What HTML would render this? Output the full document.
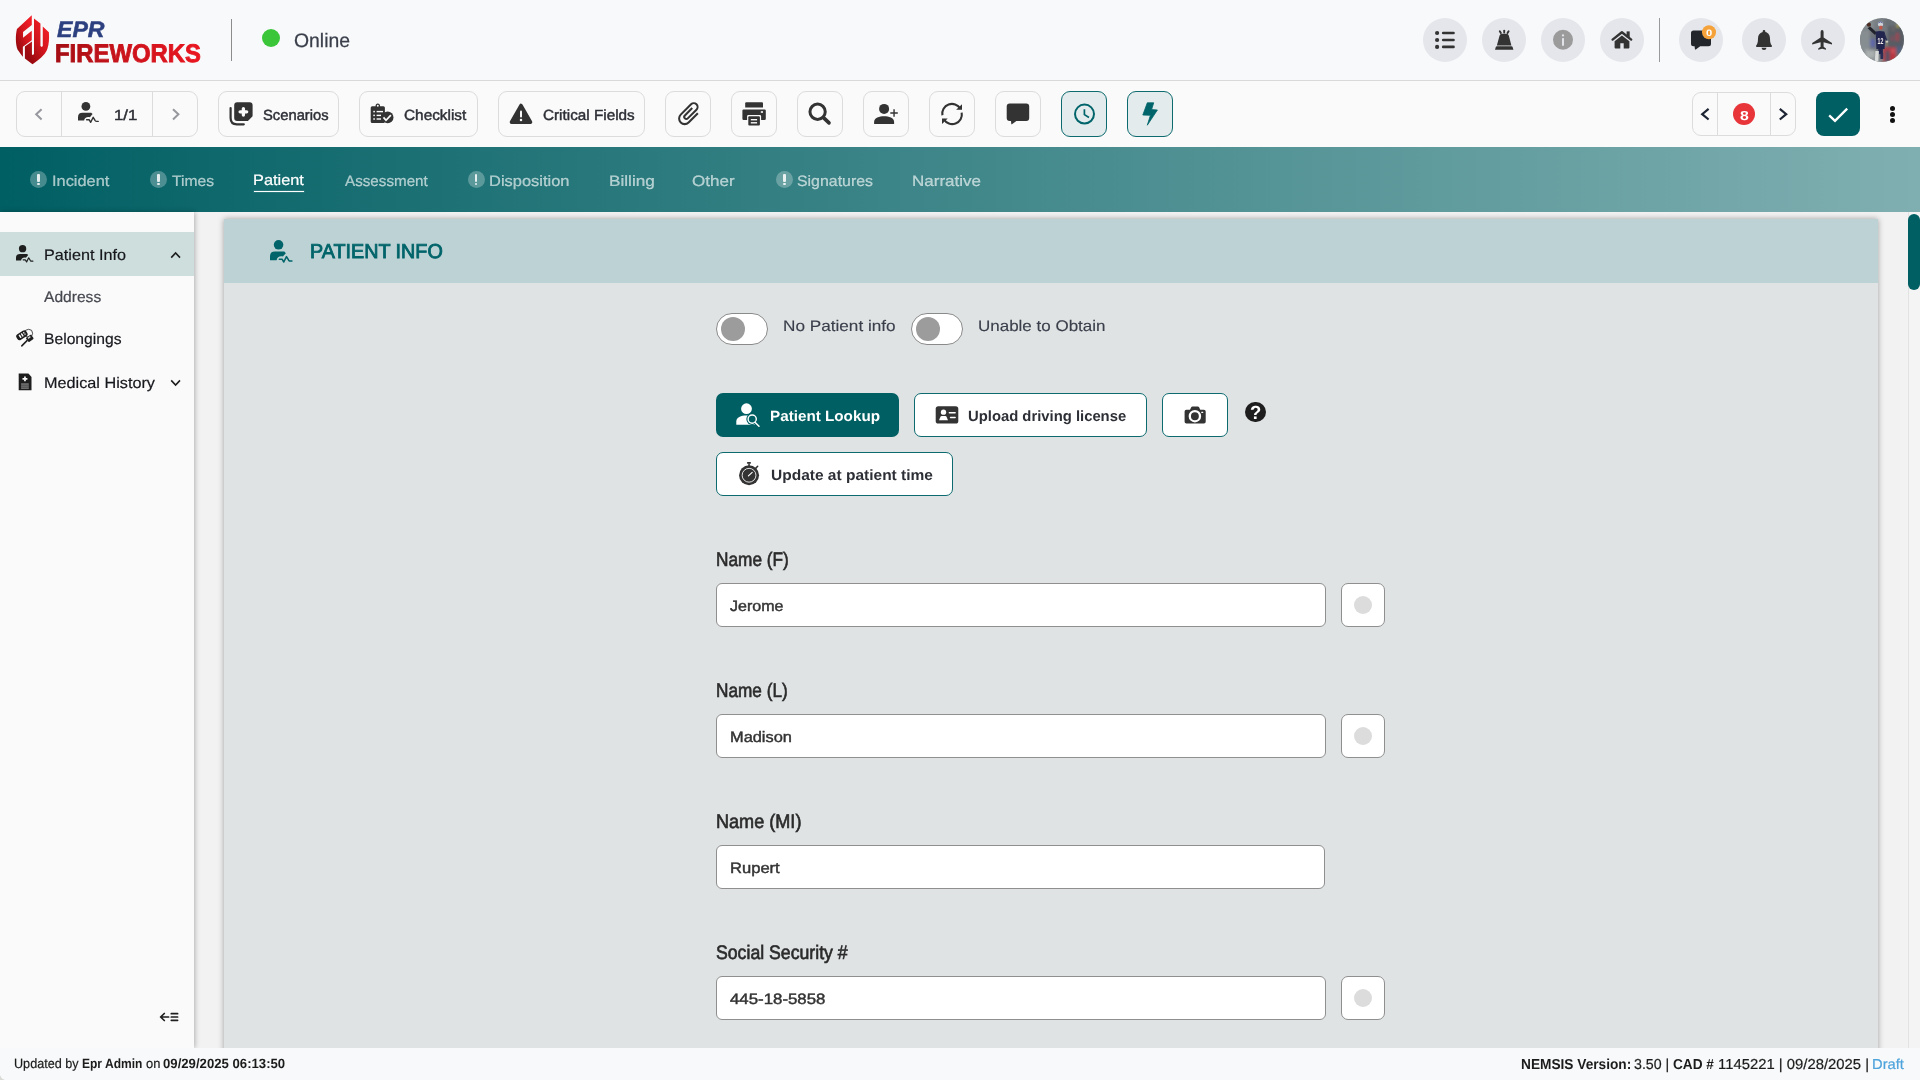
<!DOCTYPE html>
<html lang="en"><head><meta charset="utf-8"><title>EPR Fireworks - Patient Info</title>
<style>
*{box-sizing:border-box;margin:0;padding:0}
html,body{width:1920px;height:1080px;overflow:hidden;background:#f2f2f2;font-family:"Liberation Sans",sans-serif}
.a{position:absolute}
.t{position:absolute;white-space:nowrap;line-height:1;transform-origin:0 0;font-family:"Liberation Sans",sans-serif;text-rendering:geometricPrecision}
svg{position:absolute;overflow:visible}
#hdr{left:0;top:0;width:1920px;height:81px;background:#f8f9fa;border-bottom:1px solid #d9d9d9}
#tb{left:0;top:81px;width:1920px;height:66px;background:#fafafa}
#nav{left:0;top:147px;width:1920px;height:65px;background:linear-gradient(90deg,#005f63 0%,#80afb1 100%)}
#side{left:0;top:212px;width:194px;height:836px;background:#fafafa;box-shadow:1px 0 5px rgba(0,0,0,.28)}
#main{left:194px;top:212px;width:1726px;height:836px;background:#f2f2f2;overflow:hidden}
#card{left:30px;top:7px;width:1654px;height:900px;background:#dfe3e4;box-shadow:0 0 6px rgba(0,0,0,.35)}
#chead{left:0;top:0;width:1654px;height:64px;background:#bdd2d4}
#foot{left:0;top:1048px;width:1920px;height:32px;background:#f8f9fa}
.circ{position:absolute;width:44px;height:44px;border-radius:50%;background:#e4e6eb;top:18px}
.bt{position:absolute;top:91px;height:46px;border:1px solid #dcdcdc;border-radius:9px;background:#fafafa}
.sq{width:46px}
.act{background:#e3ebec;border:1.5px solid #0d6b6f}
.inp{position:absolute;left:716px;width:610px;height:44px;border:1px solid #8f8f8f;border-radius:6px;background:#fff}
.nv{position:absolute;left:1341px;width:44px;height:44px;border:1px solid #8f8f8f;border-radius:7px;background:#fff}
.nv:after{content:"";position:absolute;left:12px;top:12px;width:18px;height:18px;border-radius:50%;background:#dcdcdc}
.tog{position:absolute;top:313px;width:52px;height:32px;border-radius:16px;border:1px solid #8a8a8a;background:#fff}
.tog:after{content:"";position:absolute;left:4px;top:3px;width:24px;height:24px;border-radius:50%;background:#9c9c9c}
.ob{position:absolute;height:44px;border:1.5px solid #0d6b6f;border-radius:7px;background:#fff}
</style></head>
<body>
<header>
<div id="hdr" class="a"></div>
<div class="a" style="left:231px;top:19px;width:1px;height:42px;background:#8c8c8c"></div>
<div class="a" style="left:262px;top:29px;width:18px;height:18px;border-radius:50%;background:#3bc63a"></div>
<span class="t" style="left:293.96px;top:32px;transform:scaleX(0.9933);font-size:19.5px;font-weight:400;-webkit-text-stroke-width:0.25px;color:#3a3f4b;">Online</span>
<span class="t" style="left:56.66px;top:19px;transform:scaleX(1.0308);font-size:22.4px;font-weight:700;font-style:italic;-webkit-text-stroke-width:0.5px;color:#2d4180;">EPR</span>
<span class="t" style="left:55.13px;top:42px;transform:scaleX(0.9407);font-size:25.4px;font-weight:700;-webkit-text-stroke-width:0.9px;color:#c8141d;background:linear-gradient(90deg,#a40d14 0%,#c9131b 45%,#ea1620 100%);-webkit-background-clip:text;background-clip:text;color:transparent;-webkit-text-stroke-color:transparent;">FIREWORKS</span>
<div class="circ" style="left:1423px"></div>
<div class="circ" style="left:1482px"></div>
<div class="circ" style="left:1541px"></div>
<div class="circ" style="left:1600px"></div>
<div class="circ" style="left:1679px"></div>
<div class="circ" style="left:1742px"></div>
<div class="circ" style="left:1801px"></div>
<div class="a" style="left:1659px;top:18px;width:1px;height:44px;background:#9a9a9a"></div>
<svg style="left:10px;top:10px;width:50px;height:60px" viewBox="0 0 900 1080">
<defs><linearGradient id="lg" x1="0.85" y1="0.15" x2="0.2" y2="0.85"><stop offset="0" stop-color="#f01d26"/><stop offset="0.45" stop-color="#d4161e"/><stop offset="1" stop-color="#9a0a10"/></linearGradient></defs>
<path fill="url(#lg)" d="M392,95 L125,340 C98,450 98,600 135,710 L225,838 L232,838 L232,660 L392,545 L392,375 L235,500 L235,395 L392,270 Z"/>
<path fill="url(#lg)" d="M432,155 L548,245 L548,650 L572,668 L590,650 L590,295 L700,400 C708,520 702,610 672,700 C640,785 590,840 405,975 L268,872 L268,655 L395,565 L395,800 L410,812 L432,790 Z"/>
</svg>
<svg style="left:1430px;top:28px;width:30px;height:24px" viewBox="1430 28 30 24" ><circle cx="1437.1" cy="33" r="2.1" fill="#333"/><line x1="1443.2" y1="33" x2="1453.5" y2="33" stroke="#333" stroke-width="2.6" stroke-linecap="round"/><circle cx="1437.1" cy="40" r="2.1" fill="#333"/><line x1="1443.2" y1="40" x2="1453.5" y2="40" stroke="#333" stroke-width="2.6" stroke-linecap="round"/><circle cx="1437.1" cy="46.9" r="2.1" fill="#333"/><line x1="1443.2" y1="46.9" x2="1453.5" y2="46.9" stroke="#333" stroke-width="2.6" stroke-linecap="round"/></svg>
<svg style="left:1490px;top:28px;width:28px;height:24px" viewBox="1490 28 28 24" ><path fill="#333" d="M1497,45 L1499.6,35.6 Q1500.1,33.7 1502,33.7 L1506.4,33.7 Q1508.3,33.7 1508.8,35.6 L1511.4,45.4 L1497,45.4 Z"/>
<path fill="#333" d="M1495,49.8 L1495.8,47 Q1496,46.2 1497,46.2 L1511.4,46.2 Q1512.4,46.2 1512.6,47 L1513.4,49.8 Z"/>
<g stroke="#333" stroke-width="1.9" stroke-linecap="round"><line x1="1504.2" y1="30.6" x2="1504.2" y2="32.6"/><line x1="1499.8" y1="31.2" x2="1500.9" y2="33"/><line x1="1508.6" y1="31.2" x2="1507.5" y2="33"/></g></svg>
<svg style="left:1550px;top:28px;width:26px;height:24px" viewBox="1550 28 26 24" ><circle cx="1563" cy="39.8" r="10" fill="#9b9b9b"/><circle cx="1563" cy="35.4" r="1.15" fill="#e1e3e8"/><rect x="1562" y="38" width="2" height="7.8" rx="0.6" fill="#e1e3e8"/></svg>
<svg style="left:1609px;top:28px;width:27px;height:24px" viewBox="1609 28 27 24" ><path fill="none" stroke="#333" stroke-width="2.4" stroke-linejoin="round" stroke-linecap="round" d="M1612.6,39.6 L1621.9,32.3 L1631.2,39.6"/>
<rect x="1626.6" y="31.4" width="3.1" height="6" fill="#333"/>
<path fill="#333" d="M1614.6,41.2 L1621.9,35.4 L1629.4,41.2 L1629.4,47.6 Q1629.4,48.6 1628.4,48.6 L1623.7,48.6 L1623.7,43.2 L1620.3,43.2 L1620.3,48.6 L1615.6,48.6 Q1614.6,48.6 1614.6,47.6 Z"/></svg>
<svg style="left:1688px;top:24px;width:30px;height:28px" viewBox="1688 24 30 28" ><path fill="#23262b" d="M1693.5,30.6 H1708.5 Q1711,30.6 1711,33.1 V43.7 Q1711,46.2 1708.5,46.2 H1700.2 L1695.8,49.4 Q1695,49.9 1694.9,49 L1694.6,46.2 H1693.5 Q1691,46.2 1691,43.7 V33.1 Q1691,30.6 1693.5,30.6 Z"/>
<circle cx="1709" cy="32.3" r="7" fill="#f5a23a"/></svg>
<span class="t" style="left:1706.03px;top:29px;transform:scaleX(1.2015);font-size:9.3px;font-weight:700;color:#fff;">0</span>
<svg style="left:1753px;top:28px;width:22px;height:24px" viewBox="1753 28 22 24" ><path fill="#333" d="M1764,30 Q1765.3,30 1765.3,31.3 L1765.3,31.9 C1768.6,32.6 1770,35.4 1770,38.4 C1770,42.6 1770.8,44.2 1771.7,45.3 Q1772.3,46.1 1771.6,46.9 L1756.4,46.9 Q1755.7,46.1 1756.3,45.3 C1757.2,44.2 1758,42.6 1758,38.4 C1758,35.4 1759.4,32.6 1762.7,31.9 L1762.7,31.3 Q1762.7,30 1764,30 Z"/>
<path fill="#333" d="M1761.5,47.7 L1766.5,47.7 Q1766.3,50 1764,50 Q1761.7,50 1761.5,47.7 Z"/></svg>
<svg style="left:1810px;top:28px;width:26px;height:24px" viewBox="1810 28 26 24" ><path fill="#333" d="M1822.1,30 Q1823.6,30 1823.6,32 L1823.6,37.5 L1832,43 L1832,44.6 L1823.6,42.2 L1823.6,46.8 L1826,48.6 L1826,49.8 L1822.1,48.8 L1818.2,49.8 L1818.2,48.6 L1820.6,46.8 L1820.6,42.2 L1812.2,44.6 L1812.2,43 L1820.6,37.5 L1820.6,32 Q1820.6,30 1822.1,30 Z"/></svg>
<svg style="left:1860px;top:18px;width:44px;height:44px" viewBox="0 0 44 44">
<defs><clipPath id="av"><circle cx="22" cy="22" r="22"/></clipPath>
<filter id="avb" x="-10%" y="-10%" width="120%" height="120%"><feGaussianBlur stdDeviation="1.4"/></filter>
<filter id="avb2" x="-10%" y="-10%" width="120%" height="120%"><feGaussianBlur stdDeviation="0.55"/></filter>
<linearGradient id="avg" x1="0" y1="0" x2="0" y2="1"><stop offset="0" stop-color="#7b8286"/><stop offset="0.5" stop-color="#6a7076"/><stop offset="1" stop-color="#7c8184"/></linearGradient></defs>
<g clip-path="url(#av)"><rect width="44" height="44" fill="url(#avg)"/>
<g filter="url(#avb)">
<rect x="-1" y="12" width="11" height="22" fill="#878e92"/><rect x="2" y="2" width="12" height="9" fill="#858c90"/>
<rect x="28" y="8" width="16" height="22" fill="#575b63"/><rect x="24" y="0" width="14" height="8" fill="#6b7176"/>
<rect x="10.5" y="21" width="4.5" height="8" fill="#5d66ad"/><rect x="36" y="15" width="2.6" height="8" fill="#a8434f"/><rect x="31" y="18" width="2.5" height="5" fill="#8a4a58"/>
<circle cx="38" cy="8" r="1.4" fill="#cdbc2e"/><circle cx="33" cy="11" r="1.5" fill="#7f6f6a"/>
<rect x="23" y="29.5" width="13" height="14.5" fill="#ba3541"/><rect x="25.5" y="32.5" width="4.2" height="11.5" fill="#4b5466"/><rect x="31.5" y="31" width="3" height="4" fill="#d05a63"/>
<rect x="5" y="32" width="10.5" height="10" fill="#a9aeae"/><rect x="36.5" y="28" width="4.5" height="7" fill="#4e5f80"/><rect x="36" y="35" width="8" height="9" fill="#666c73"/>
<rect x="8" y="40" width="14" height="4" fill="#8a9094"/>
</g>
<g filter="url(#avb2)">
<path d="M7.6,10.2 L10.2,8.6 L16.6,14.6 L15,17 Z" fill="#20242c"/><circle cx="8.9" cy="6.7" r="2.1" fill="#4b2a22"/>
<path d="M15.6,13.6 Q19.5,12.2 24.3,13.6 L25.2,17 L24.6,31 L16.4,31 Z" fill="#23274f"/>
<path d="M24.2,14 L27.4,22.6 L26.4,23.6 L23.6,18 Z" fill="#262a4d"/><circle cx="27" cy="23.8" r="1.3" fill="#c9c9c0"/><rect x="26.4" y="24.5" width="1.4" height="3" fill="#7d7a66"/>
<circle cx="20.5" cy="6" r="2.6" fill="#cfd3da"/><path d="M18.4,5 Q20.5,2.6 22.6,5" stroke="#3b4a8c" stroke-width=".8" fill="none"/>
<rect x="19.2" y="7.8" width="3.2" height="3.8" rx="1" fill="#c0564a"/>
<rect x="18.3" y="30.5" width="4.6" height="5.6" fill="#23274f"/><rect x="20.4" y="35" width="2.8" height="6" fill="#2b2f55"/>
<path d="M15.4,33 L18.9,33 L18.3,43.5 L14.8,43.5 Z" fill="#d8dbd9"/>
<text x="17.6" y="26.2" font-family="Liberation Sans, sans-serif" font-size="8.6" font-weight="700" fill="#f4ecec" textLength="5.8" lengthAdjust="spacingAndGlyphs">12</text>
</g>
</g></svg>
</header>
<div class="toolbar" role="toolbar">
<div id="tb" class="a"></div>
<div class="bt" style="left:16px;width:182px"></div>
<div class="a" style="left:61px;top:92px;width:1px;height:44px;background:#dcdcdc"></div>
<div class="a" style="left:152px;top:92px;width:1px;height:44px;background:#dcdcdc"></div>
<span class="t" style="left:113.91px;top:109px;transform:scaleX(1.1424);font-size:14.7px;font-weight:400;-webkit-text-stroke-width:0.45px;color:#2d2f36;">1/1</span>
<div class="bt" style="left:218px;width:121px"></div>
<span class="t" style="left:262.52px;top:109px;transform:scaleX(1.0053);font-size:14.7px;font-weight:400;-webkit-text-stroke-width:0.45px;color:#2d2f36;">Scenarios</span>
<div class="bt" style="left:359px;width:119px"></div>
<span class="t" style="left:403.91px;top:109px;transform:scaleX(1.0454);font-size:14.7px;font-weight:400;-webkit-text-stroke-width:0.45px;color:#2d2f36;">Checklist</span>
<div class="bt" style="left:498px;width:147px"></div>
<span class="t" style="left:542.71px;top:109px;transform:scaleX(1.0400);font-size:14.7px;font-weight:400;-webkit-text-stroke-width:0.45px;color:#2d2f36;">Critical Fields</span>
<div class="bt sq" style="left:665px"></div>
<div class="bt sq" style="left:731px"></div>
<div class="bt sq" style="left:797px"></div>
<div class="bt sq" style="left:863px"></div>
<div class="bt sq" style="left:929px"></div>
<div class="bt sq" style="left:995px"></div>
<div class="bt sq act" style="left:1061px"></div>
<div class="bt sq act" style="left:1127px"></div>
<div class="bt" style="left:1692px;top:92px;width:104px;height:44px"></div>
<div class="a" style="left:1717px;top:93px;width:1px;height:42px;background:#dcdcdc"></div>
<div class="a" style="left:1770px;top:93px;width:1px;height:42px;background:#dcdcdc"></div>
<div class="a" style="left:1733px;top:103px;width:22px;height:22px;border-radius:50%;background:#e8353a"></div>
<span class="t" style="left:1739.70px;top:109px;transform:scaleX(1.2175);font-size:13px;font-weight:700;color:#fff;">8</span>
<div class="a" style="left:1816px;top:92px;width:44px;height:44px;border-radius:8px;background:#005f63"></div>
<div class="a" style="left:1889.5px;top:106.1px;width:5px;height:5px;border-radius:50%;background:#111"></div>
<div class="a" style="left:1889.5px;top:112.0px;width:5px;height:5px;border-radius:50%;background:#111"></div>
<div class="a" style="left:1889.5px;top:117.9px;width:5px;height:5px;border-radius:50%;background:#111"></div>
<svg style="left:30px;top:104px;width:18px;height:21px" viewBox="30 104 18 21" ><path fill="none" stroke="#96989e" stroke-width="2" d="M41.6,109.2 L36.2,114.3 L41.6,119.4"/></svg>
<svg style="left:166px;top:104px;width:18px;height:21px" viewBox="166 104 18 21" ><path fill="none" stroke="#96989e" stroke-width="2" d="M173,109.2 L178.4,114.3 L173,119.4"/></svg>
<svg style="left:77.5px;top:102.3px;width:20.70px;height:21.00px" viewBox="0 0 20.7 21"><circle cx="7.9" cy="4.4" r="4.4" fill="#333"/><path fill="#333" d="M0,18.6 L0,15.2 Q0,10.7 4.5,10.7 L13.2,10.7 L14.6,12.1 L11.9,15.2 C9,14.5 6.5,15.6 6.1,18.6 Z"/><path fill="none" stroke="#333" stroke-width="1.45" stroke-linejoin="round" stroke-linecap="round" d="M8.6,17.7 L11.1,17.7 L12.7,20.3 L15.2,15.3 L17.2,18.6 Q17.8,19.4 18.8,19.4 L20.2,19.4"/></svg>
<svg style="left:226px;top:100px;width:30px;height:28px" viewBox="226 100 30 28" ><path fill="#333" d="M237.2,102.3 H249.6 Q252.6,102.3 252.6,105.3 V115.6 Q252.6,116.3 252.1,116.8 L248.4,120.4 Q247.9,120.9 247.2,120.9 H237.2 Q234.2,120.9 234.2,117.9 V105.3 Q234.2,102.3 237.2,102.3 Z"/>
<path fill="none" stroke="#fafafa" stroke-width="3.3" stroke-linecap="round" d="M243.4,108.6 V115.1 M240.1,111.85 H246.7"/>
<path fill="none" stroke="#333" stroke-width="2.2" stroke-linecap="round" d="M230.6,108.1 V118 Q230.6,124.3 236.9,124.3 H243.8"/></svg>
<svg style="left:368px;top:100px;width:28px;height:28px" viewBox="368 100 28 28" ><path fill="#333" d="M372.2,106.3 H375.5 Q375.6,103.6 377.8,103.6 Q380,103.6 380.1,106.3 H383.4 Q384.9,106.3 384.9,107.8 V121.4 Q384.9,122.9 383.4,122.9 H372.2 Q370.7,122.9 370.7,121.4 V107.8 Q370.7,106.3 372.2,106.3 Z"/><circle cx="377.8" cy="105.7" r="0.95" fill="#fafafa"/><rect x="373.3" y="110.85" width="1.6" height="1.5" fill="#fafafa"/><rect x="376.6" y="110.89999999999999" width="6.399999999999977" height="1.4" fill="#fafafa"/><rect x="373.3" y="114.65" width="1.6" height="1.5" fill="#fafafa"/><rect x="376.6" y="114.7" width="4.399999999999977" height="1.4" fill="#fafafa"/><rect x="373.3" y="118.25" width="1.6" height="1.5" fill="#fafafa"/><rect x="376.6" y="118.3" width="4.399999999999977" height="1.4" fill="#fafafa"/><circle cx="387.7" cy="117.4" r="5.8" fill="#333"/><path fill="none" stroke="#fafafa" stroke-width="1.7" d="M383.5,117.4 L386,120.3 L390.9,115.2"/></svg>
<svg style="left:506px;top:100px;width:30px;height:28px" viewBox="506 100 30 28" ><path fill="#333" stroke="#333" stroke-width="3.4" stroke-linejoin="round" d="M521,105.4 L530.6,122.2 H511.4 Z"/>
<rect x="520" y="110.4" width="2" height="7.2" rx="1" fill="#fafafa"/><circle cx="521" cy="120" r="1.25" fill="#fafafa"/></svg>
<svg style="left:675px;top:99px;width:27px;height:29px" viewBox="675 99 27 29" ><g transform="translate(688.8,113.6) rotate(45) scale(1.17) translate(-12,-12)"><path fill="none" stroke="#333" stroke-width="1.75" d="M17.25,6.3 V17.5 A4.75,4.75 0 0 1 7.75,17.5 V5 A3.25,3.25 0 0 1 14.25,5 V15.5 A1.75,1.75 0 0 1 10.75,15.5 V6.6"/></g></svg>
<svg style="left:740px;top:100px;width:28px;height:28px" viewBox="740 100 28 28" ><path fill="#333" d="M746.2,102.2 H762 Q763,102.2 763,103.2 V107.5 H745.2 V103.2 Q745.2,102.2 746.2,102.2 Z"/>
<path fill="#333" d="M743.6,109.4 H764.6 Q765.8,109.4 765.8,110.6 V118.8 Q765.8,120 764.6,120 H761.1 V116.2 Q761.1,115 759.9,115 H748.3 Q747.1,115 747.1,116.2 V120 H743.6 Q742.4,120 742.4,118.8 V110.6 Q742.4,109.4 743.6,109.4 Z"/>
<rect x="748.3" y="116.2" width="11.6" height="9.4" rx="1" fill="#333"/>
<rect x="750.8" y="119" width="6.3" height="1.4" fill="#fafafa"/><rect x="750.8" y="122.1" width="6.3" height="1.4" fill="#fafafa"/>
<rect x="760.8" y="111.2" width="2.2" height="1.6" fill="#fafafa"/></svg>
<svg style="left:806px;top:100px;width:28px;height:28px" viewBox="806 100 28 28" ><circle cx="817.6" cy="111.75" r="7.65" fill="none" stroke="#333" stroke-width="3"/>
<line x1="824" y1="118.1" x2="829" y2="122.9" stroke="#333" stroke-width="3.6" stroke-linecap="round"/></svg>
<svg style="left:872px;top:100px;width:28px;height:28px" viewBox="872 100 28 28" ><circle cx="884.1" cy="108.9" r="5" fill="#333"/>
<path fill="#333" d="M874.1,123.9 V121.9 C874.1,117.8 879.4,116.2 884.1,116.2 C888.8,116.2 894.1,117.8 894.1,121.9 V123.9 Z"/>
<path fill="none" stroke="#333" stroke-width="1.4" d="M890.3,113 H897.8 M894.05,109.25 V116.7"/></svg>
<svg style="left:938px;top:100px;width:28px;height:28px" viewBox="938 100 28 28" ><path fill="none" stroke="#333" stroke-width="2.1" d="M942.4,115.2 A9.7,9.7 0 0 1 960.3,108.6"/>
<path fill="#333" d="M962,104.2 V109.8 H956.1 Z"/>
<path fill="none" stroke="#333" stroke-width="2.1" d="M961.7,112.6 A9.7,9.7 0 0 1 943.8,119.3"/>
<path fill="#333" d="M942,124 V118.4 H947.7 Z"/></svg>
<svg style="left:1004px;top:100px;width:28px;height:28px" viewBox="1004 100 28 28" ><path fill="#333" d="M1009.7,103.4 H1026.2 Q1029.2,103.4 1029.2,106.4 V117.9 Q1029.2,120.9 1026.2,120.9 H1016.4 L1011.9,124.2 Q1011.3,124.6 1011.3,123.9 L1011,120.9 H1009.7 Q1006.7,120.9 1006.7,117.9 V106.4 Q1006.7,103.4 1009.7,103.4 Z"/></svg>
<svg style="left:1072px;top:101px;width:25px;height:26px" viewBox="1072 101 25 26" ><circle cx="1084.5" cy="114.05" r="9.5" fill="none" stroke="#00646a" stroke-width="2"/>
<path fill="none" stroke="#00646a" stroke-width="1.7" d="M1084.4,109.2 V114.6 L1089,117.5"/></svg>
<svg style="left:1140px;top:100px;width:20px;height:28px" viewBox="1140 100 20 28" ><path fill="#00646a" stroke="#00646a" stroke-width="0.8" stroke-linejoin="round" d="M1147.3,102.8 H1153.7 L1151.6,109.6 L1157.4,110 L1147.3,125.2 L1150.4,115.3 L1142.8,115 Z"/></svg>
<svg style="left:1698px;top:104px;width:16px;height:21px" viewBox="1698 104 16 21" ><path fill="none" stroke="#1d2433" stroke-width="2.2" d="M1708.6,108.9 L1702.2,114.2 L1708.6,119.5"/></svg>
<svg style="left:1776px;top:104px;width:16px;height:21px" viewBox="1776 104 16 21" ><path fill="none" stroke="#1d2433" stroke-width="2.2" d="M1779.8,108.9 L1786.2,114.2 L1779.8,119.5"/></svg>
<svg style="left:1824px;top:102px;width:28px;height:24px" viewBox="1824 102 28 24" ><path fill="none" stroke="#fff" stroke-width="2.3" d="M1829.2,115.4 L1835,120.8 L1847.2,108.6"/></svg>
</div>
<nav>
<div id="nav" class="a"></div>
<span class="t" style="left:51.71px;top:174px;transform:scaleX(1.0913);font-size:15px;font-weight:400;-webkit-text-stroke-width:0.2px;color:rgba(255,255,255,.62);">Incident</span>
<div class="a" style="left:30.0px;top:171.2px;width:17px;height:17px;border-radius:50%;background:rgba(255,255,255,.27)"></div>
<div class="a" style="left:37.4px;top:173.8px;width:2.2px;height:8.2px;border-radius:1px;background:rgba(255,255,255,.85)"></div>
<div class="a" style="left:37.4px;top:182.8px;width:2.2px;height:2.2px;border-radius:1px;background:rgba(255,255,255,.85)"></div>
<span class="t" style="left:171.79px;top:174px;transform:scaleX(1.0438);font-size:15px;font-weight:400;-webkit-text-stroke-width:0.2px;color:rgba(255,255,255,.62);">Times</span>
<div class="a" style="left:150.0px;top:171.2px;width:17px;height:17px;border-radius:50%;background:rgba(255,255,255,.27)"></div>
<div class="a" style="left:157.4px;top:173.8px;width:2.2px;height:8.2px;border-radius:1px;background:rgba(255,255,255,.85)"></div>
<div class="a" style="left:157.4px;top:182.8px;width:2.2px;height:2.2px;border-radius:1px;background:rgba(255,255,255,.85)"></div>
<span class="t" style="left:344.57px;top:174px;transform:scaleX(1.0130);font-size:15px;font-weight:400;-webkit-text-stroke-width:0.2px;color:rgba(255,255,255,.62);">Assessment</span>
<span class="t" style="left:489.26px;top:174px;transform:scaleX(1.0971);font-size:15px;font-weight:400;-webkit-text-stroke-width:0.2px;color:rgba(255,255,255,.62);">Disposition</span>
<div class="a" style="left:467.9px;top:171.2px;width:17px;height:17px;border-radius:50%;background:rgba(255,255,255,.27)"></div>
<div class="a" style="left:475.29999999999995px;top:173.8px;width:2.2px;height:8.2px;border-radius:1px;background:rgba(255,255,255,.85)"></div>
<div class="a" style="left:475.29999999999995px;top:182.8px;width:2.2px;height:2.2px;border-radius:1px;background:rgba(255,255,255,.85)"></div>
<span class="t" style="left:608.71px;top:174px;transform:scaleX(1.1467);font-size:15px;font-weight:400;-webkit-text-stroke-width:0.2px;color:rgba(255,255,255,.62);">Billing</span>
<span class="t" style="left:692.42px;top:174px;transform:scaleX(1.1367);font-size:15px;font-weight:400;-webkit-text-stroke-width:0.2px;color:rgba(255,255,255,.62);">Other</span>
<span class="t" style="left:796.86px;top:174px;transform:scaleX(1.0590);font-size:15px;font-weight:400;-webkit-text-stroke-width:0.2px;color:rgba(255,255,255,.62);">Signatures</span>
<div class="a" style="left:775.95px;top:171.2px;width:17px;height:17px;border-radius:50%;background:rgba(255,255,255,.27)"></div>
<div class="a" style="left:783.35px;top:173.8px;width:2.2px;height:8.2px;border-radius:1px;background:rgba(255,255,255,.85)"></div>
<div class="a" style="left:783.35px;top:182.8px;width:2.2px;height:2.2px;border-radius:1px;background:rgba(255,255,255,.85)"></div>
<span class="t" style="left:911.53px;top:174px;transform:scaleX(1.1332);font-size:15px;font-weight:400;-webkit-text-stroke-width:0.2px;color:rgba(255,255,255,.62);">Narrative</span>
<span class="t" style="left:253.18px;top:173px;transform:scaleX(1.0886);font-size:15px;font-weight:400;-webkit-text-stroke-width:0.2px;color:#fff;">Patient</span>
<div class="a" style="left:254px;top:191px;width:50px;height:1px;background:#fff;box-shadow:0 0 0 .5px rgba(255,255,255,.18)"></div>
</nav>
<main>
<div id="main" class="a"><div id="card" class="a"><div id="chead" class="a"></div></div></div>
<span class="t" style="left:310.10px;top:242px;transform:scaleX(0.9827);font-size:20.1px;font-weight:400;-webkit-text-stroke-width:0.85px;color:#00646a;">PATIENT INFO</span>
<div class="tog" style="left:716px"></div>
<div class="tog" style="left:911px"></div>
<span class="t" style="left:783.32px;top:319px;transform:scaleX(1.1225);font-size:15.3px;font-weight:400;-webkit-text-stroke-width:0.15px;color:#3a3f4b;">No Patient info</span>
<span class="t" style="left:977.75px;top:319px;transform:scaleX(1.1102);font-size:15.3px;font-weight:400;-webkit-text-stroke-width:0.15px;color:#3a3f4b;">Unable to Obtain</span>
<div class="a" style="left:716px;top:393px;width:183px;height:44px;border-radius:7px;background:#005f63"></div>
<span class="t" style="left:769.91px;top:410px;transform:scaleX(1.0293);font-size:14.8px;font-weight:700;color:#fff;">Patient Lookup</span>
<div class="ob" style="left:914px;top:393px;width:233px"></div>
<span class="t" style="left:968.16px;top:410px;transform:scaleX(1.0019);font-size:14.8px;font-weight:700;color:#2d2f36;">Upload driving license</span>
<div class="ob" style="left:1162px;top:393px;width:66px"></div>
<div class="ob" style="left:716px;top:452px;width:237px"></div>
<span class="t" style="left:770.71px;top:469px;transform:scaleX(1.0478);font-size:14.8px;font-weight:700;color:#2d2f36;">Update at patient time</span>
<span class="t" style="left:715.88px;top:551px;transform:scaleX(0.8836);font-size:19.5px;font-weight:400;-webkit-text-stroke-width:0.65px;color:#2b2b2b;">Name (F)</span>
<div class="inp" style="top:583px;width:610px"></div>
<span class="t" style="left:730.36px;top:599px;transform:scaleX(1.0607);font-size:15.1px;font-weight:400;-webkit-text-stroke-width:0.45px;color:#333;">Jerome</span>
<div class="nv" style="top:583px"></div>
<span class="t" style="left:715.89px;top:682px;transform:scaleX(0.8822);font-size:19.5px;font-weight:400;-webkit-text-stroke-width:0.65px;color:#2b2b2b;">Name (L)</span>
<div class="inp" style="top:714px;width:610px"></div>
<span class="t" style="left:729.63px;top:730px;transform:scaleX(1.0846);font-size:15.1px;font-weight:400;-webkit-text-stroke-width:0.45px;color:#333;">Madison</span>
<div class="nv" style="top:714px"></div>
<span class="t" style="left:715.83px;top:813px;transform:scaleX(0.9276);font-size:19.5px;font-weight:400;-webkit-text-stroke-width:0.65px;color:#2b2b2b;">Name (MI)</span>
<div class="inp" style="top:845px;width:609px"></div>
<span class="t" style="left:729.62px;top:861px;transform:scaleX(1.0976);font-size:15.1px;font-weight:400;-webkit-text-stroke-width:0.45px;color:#333;">Rupert</span>
<span class="t" style="left:715.94px;top:944px;transform:scaleX(0.9063);font-size:19.5px;font-weight:400;-webkit-text-stroke-width:0.65px;color:#2b2b2b;">Social Security #</span>
<div class="inp" style="top:976px;width:610px"></div>
<span class="t" style="left:730.26px;top:992px;transform:scaleX(1.1151);font-size:15.1px;font-weight:400;-webkit-text-stroke-width:0.45px;color:#333;">445-18-5858</span>
<div class="nv" style="top:976px"></div>
<div class="a" style="left:1908px;top:212px;width:12px;height:836px;background:#f4f4f4;border-left:1px solid #e2e2e2"></div>
<div class="a" style="left:1908px;top:214px;width:12px;height:76px;border-radius:6px;background:#005f63"></div>
<svg style="left:270.3px;top:239.6px;width:22.46px;height:22.79px" viewBox="0 0 20.7 21"><circle cx="7.9" cy="4.4" r="4.4" fill="#00646a"/><path fill="#00646a" d="M0,18.6 L0,15.2 Q0,10.7 4.5,10.7 L13.2,10.7 L14.6,12.1 L11.9,15.2 C9,14.5 6.5,15.6 6.1,18.6 Z"/><path fill="none" stroke="#00646a" stroke-width="1.45" stroke-linejoin="round" stroke-linecap="round" d="M8.6,17.7 L11.1,17.7 L12.7,20.3 L15.2,15.3 L17.2,18.6 Q17.8,19.4 18.8,19.4 L20.2,19.4"/></svg>
<svg style="left:734px;top:401px;width:28px;height:28px" viewBox="734 401 28 28" ><circle cx="746.5" cy="408.7" r="5.4" fill="#fff"/>
<path fill="#fff" d="M736.3,424.8 V421.4 C736.3,417.4 741,415.6 746.5,415.6 C750,415.6 753,416.3 755,417.6 V424.8 Z"/>
<circle cx="752.2" cy="419.1" r="5.9" fill="#005f63"/>
<circle cx="752.2" cy="419.1" r="4.1" fill="none" stroke="#fff" stroke-width="1.4"/>
<line x1="755.2" y1="422.4" x2="759" y2="426.3" stroke="#005f63" stroke-width="3.2"/>
<line x1="755.2" y1="422.4" x2="759" y2="426.3" stroke="#fff" stroke-width="1.5" stroke-linecap="round"/></svg>
<svg style="left:934px;top:404px;width:26px;height:22px" viewBox="934 404 26 22" ><rect x="935.7" y="406.2" width="22.6" height="17.3" rx="2.6" fill="#333"/>
<circle cx="943.5" cy="412.2" r="2.65" fill="#fff"/>
<path fill="#fff" d="M939,420.2 L940.6,416.6 Q940.9,416 941.6,416 H945.4 Q946.1,416 946.4,416.6 L948,420.2 Z"/>
<rect x="948.6" y="411.9" width="7.3" height="1.6" rx=".8" fill="#fff"/><rect x="949.8" y="416.7" width="6.1" height="1.6" rx=".8" fill="#fff"/></svg>
<svg style="left:1182px;top:404px;width:26px;height:22px" viewBox="1182 404 26 22" ><path fill="#333" d="M1186.4,409.7 H1190 L1191.2,407.3 Q1191.6,406.5 1192.5,406.5 H1197.8 Q1198.7,406.5 1199.1,407.3 L1200.3,409.7 H1203.9 Q1205.7,409.7 1205.7,411.5 V421.7 Q1205.7,423.5 1203.9,423.5 H1186.4 Q1184.6,423.5 1184.6,421.7 V411.5 Q1184.6,409.7 1186.4,409.7 Z"/>
<circle cx="1194.9" cy="416.2" r="5.1" fill="none" stroke="#fff" stroke-width="2.3"/>
<rect x="1201.2" y="411.7" width="2.1" height="1.3" rx=".4" fill="#fff"/></svg>
<div class="a" style="left:1245.3px;top:401.7px;width:20.3px;height:20.3px;border-radius:50%;background:#1e1e1e"></div>
<span class="t" style="left:1249.71px;top:404px;transform:scaleX(0.9726);font-size:19px;font-weight:700;color:#fff;">?</span>
<svg style="left:737px;top:460px;width:24px;height:27px" viewBox="737 460 24 27" ><circle cx="749.05" cy="475.25" r="10" fill="#333"/>
<circle cx="749.05" cy="475.25" r="6.9" fill="none" stroke="#fff" stroke-width=".85"/>
<line x1="748.4" y1="475.8" x2="752.2" y2="472.3" stroke="#fff" stroke-width="1.15" stroke-linecap="round"/>
<rect x="746.9" y="462.1" width="4.1" height="1.7" rx=".8" fill="#333"/><rect x="748.3" y="463.4" width="1.5" height="2.6" fill="#333"/>
<line x1="755.8" y1="468.1" x2="757.7" y2="466.3" stroke="#333" stroke-width="1.5" stroke-linecap="round"/></svg>
</main>
<aside>
<div id="side" class="a"></div>
<div class="a" style="left:0;top:232px;width:194px;height:44px;background:#cddedd"></div>
<span class="t" style="left:43.70px;top:248px;transform:scaleX(1.0581);font-size:15.3px;font-weight:400;-webkit-text-stroke-width:0.2px;color:#17181d;">Patient Info</span>
<span class="t" style="left:44.27px;top:290px;transform:scaleX(1.0196);font-size:15.3px;font-weight:400;-webkit-text-stroke-width:0.2px;color:#45474f;">Address</span>
<span class="t" style="left:43.74px;top:332px;transform:scaleX(1.0242);font-size:15.3px;font-weight:400;-webkit-text-stroke-width:0.2px;color:#17181d;">Belongings</span>
<span class="t" style="left:43.70px;top:376px;transform:scaleX(1.0613);font-size:15.3px;font-weight:400;-webkit-text-stroke-width:0.2px;color:#17181d;">Medical History</span>
<svg style="left:16px;top:245.3px;width:17.28px;height:17.54px" viewBox="0 0 20.7 21"><circle cx="7.9" cy="4.4" r="4.4" fill="#1e1e1e"/><path fill="#1e1e1e" d="M0,18.6 L0,15.2 Q0,10.7 4.5,10.7 L13.2,10.7 L14.6,12.1 L11.9,15.2 C9,14.5 6.5,15.6 6.1,18.6 Z"/><path fill="none" stroke="#1e1e1e" stroke-width="1.45" stroke-linejoin="round" stroke-linecap="round" d="M8.6,17.7 L11.1,17.7 L12.7,20.3 L15.2,15.3 L17.2,18.6 Q17.8,19.4 18.8,19.4 L20.2,19.4"/></svg>
<svg style="left:168px;top:248px;width:16px;height:14px" viewBox="168 248 16 14" ><path fill="none" stroke="#1e1e1e" stroke-width="1.6" d="M171.2,257.6 L175.6,253 L180,257.6"/></svg>
<svg style="left:168px;top:376px;width:16px;height:14px" viewBox="168 376 16 14" ><path fill="none" stroke="#1e1e1e" stroke-width="1.6" d="M171.2,380.4 L175.6,385 L180,380.4"/></svg>
<svg style="left:14px;top:326px;width:24px;height:24px" viewBox="14 326 24 24" ><g transform="rotate(-33 21.9 335.2)"><rect x="16.1" y="331.9" width="11.6" height="6.6" rx="2.6" fill="#1e1e1e"/>
<rect x="19" y="333.4" width="1.5" height="3.6" rx=".5" fill="#fafafa"/><rect x="21.6" y="333.4" width="1.5" height="3.6" rx=".5" fill="#fafafa"/><rect x="24.2" y="333.4" width="1.5" height="3.6" rx=".5" fill="#fafafa"/></g>
<circle cx="28.6" cy="333.3" r="4" fill="none" stroke="#1e1e1e" stroke-width=".8"/>
<g transform="rotate(-36 29.8 338.4)"><rect x="26.6" y="335.8" width="6.4" height="5.2" rx="1" fill="#1e1e1e"/><rect x="28.3" y="336.6" width="3" height="1.4" fill="#fafafa" opacity=".8"/></g>
<line x1="27" y1="340.6" x2="21.8" y2="345.9" stroke="#1e1e1e" stroke-width="1.5" stroke-linecap="round"/></svg>
<svg style="left:17px;top:372px;width:17px;height:20px" viewBox="17 372 17 20" ><path fill="#1e1e1e" d="M18.7,373.5 H28.4 L31.5,376.9 V390.2 H18.7 Z"/>
<path fill="#fafafa" d="M24.1,376.4 h1.7 v1.6 h1.6 v1.7 h-1.6 v1.6 h-1.7 v-1.6 h-1.6 v-1.7 h1.6 z"/>
<rect x="21.1" y="383.2" width="7.7" height="5.8" fill="#6e6e6e"/><rect x="21.1" y="384.9" width="7.7" height=".5" fill="#3a3a3a"/><rect x="21.1" y="386.9" width="7.7" height=".5" fill="#3a3a3a"/></svg>
<svg style="left:158px;top:1010px;width:23px;height:14px" viewBox="158 1010 23 14" ><path fill="none" stroke="#1e1e1e" stroke-width="1.7" stroke-linecap="round" stroke-linejoin="round" d="M164.3,1013.5 L160.6,1017 L164.3,1020.5 M160.8,1017 H168.6 M171.3,1013.7 H177.6 M171.3,1017 H177.6 M171.3,1020.3 H177.6"/></svg>
</aside>
<footer>
<div id="foot" class="a"></div>
<span class="t" style="left:14.28px;top:1057px;transform:scaleX(0.9434);font-size:13.4px;font-weight:400;-webkit-text-stroke-width:0.2px;color:#1c1c1c;">Updated by</span>
<span class="t" style="left:82.06px;top:1057px;transform:scaleX(0.8983);font-size:13.4px;font-weight:700;color:#1c1c1c;">Epr Admin</span>
<span class="t" style="left:145.64px;top:1057px;transform:scaleX(0.9653);font-size:13.4px;font-weight:400;-webkit-text-stroke-width:0.2px;color:#1c1c1c;">on</span>
<span class="t" style="left:162.72px;top:1057px;transform:scaleX(0.9827);font-size:13.4px;font-weight:700;color:#1c1c1c;">09/29/2025 06:13:50</span>
<span class="t" style="left:1520.99px;top:1058px;transform:scaleX(0.9508);font-size:14.4px;font-weight:700;color:#1c1c1c;">NEMSIS Version:</span>
<span class="t" style="left:1633.88px;top:1058px;transform:scaleX(0.9859);font-size:14.4px;font-weight:400;-webkit-text-stroke-width:0.2px;color:#1c1c1c;">3.50 |</span>
<span class="t" style="left:1673.04px;top:1058px;transform:scaleX(0.9485);font-size:14.4px;font-weight:700;color:#1c1c1c;">CAD #</span>
<span class="t" style="left:1718.09px;top:1058px;transform:scaleX(1.0316);font-size:14.4px;font-weight:400;-webkit-text-stroke-width:0.2px;color:#1c1c1c;">1145221 | 09/28/2025 |</span>
<span class="t" style="left:1872.38px;top:1058px;transform:scaleX(1.0227);font-size:14.4px;font-weight:400;-webkit-text-stroke-width:0.2px;color:#4ea3dc;">Draft</span>
<div class="a" style="left:0;top:1074px;width:6px;height:6px;background:radial-gradient(circle at 100% 0,rgba(0,0,0,0) 5.6px,#d9d9d6 6.2px)"></div>
</footer>
</body></html>
